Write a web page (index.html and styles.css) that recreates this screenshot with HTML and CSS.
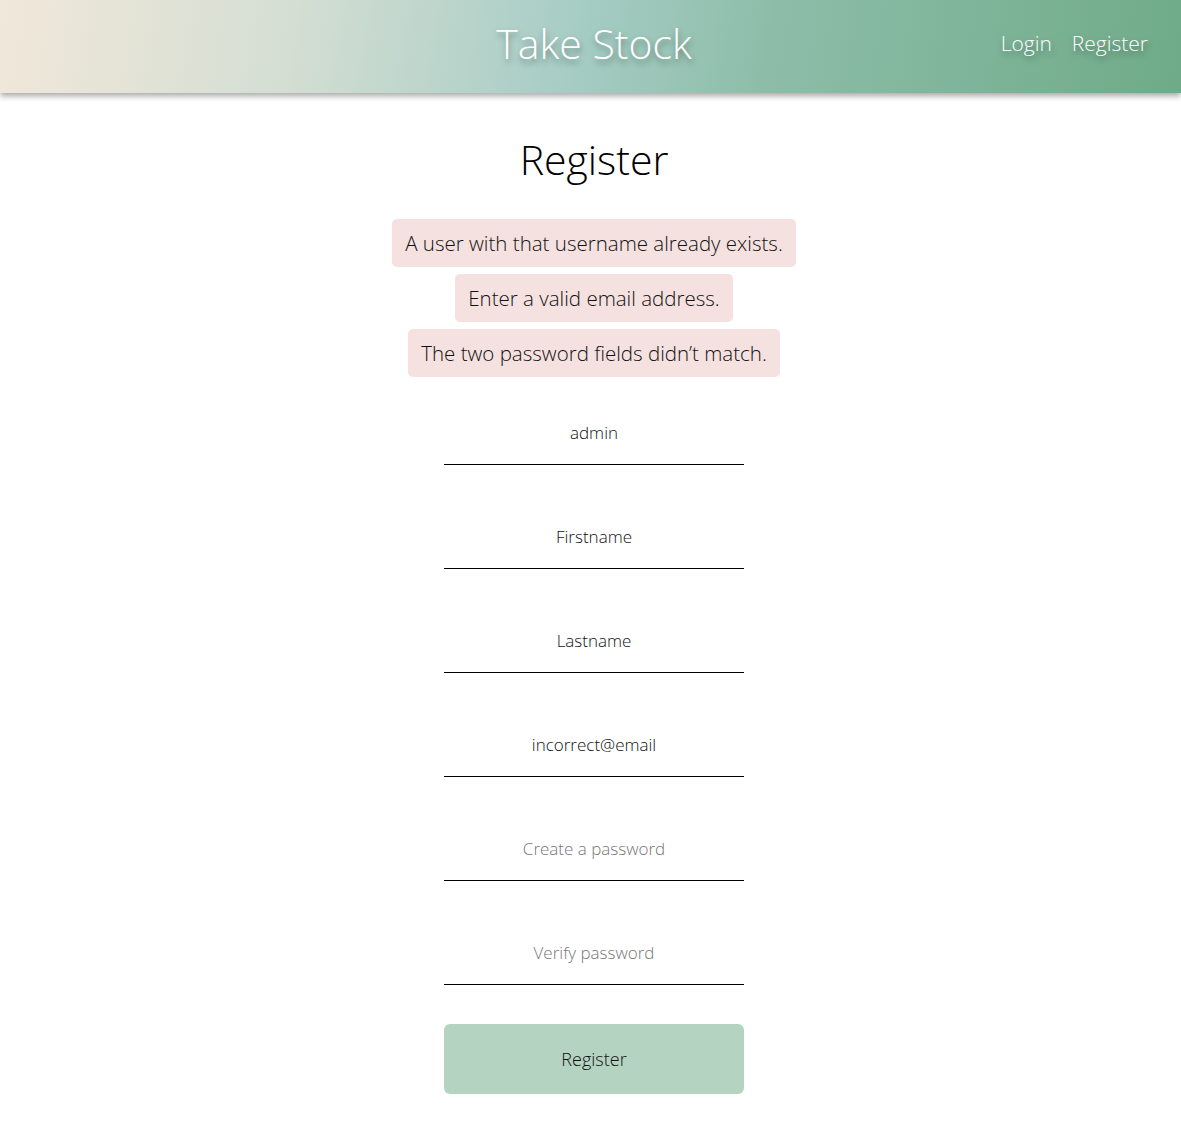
FILE: index.html
```html
<!DOCTYPE html>
<html lang="en">
<head>
<meta charset="utf-8">
<title>Take Stock - Register</title>
<link rel="stylesheet" href="styles.css">
</head>
<body>
<header class="topbar">
  <div class="topbar-side"></div>
  <a class="brand" href="#">Take Stock</a>
  <nav class="nav">
    <a href="#" class="nav-link">Login</a>
    <a href="#" class="nav-link">Register</a>
  </nav>
</header>
<main class="page">
  <h1 class="title">Register</h1>
  <ul class="errors">
    <li class="error">A user with that username already exists.</li>
    <li class="error">Enter a valid email address.</li>
    <li class="error">The two password fields didn’t match.</li>
  </ul>
  <form class="form">
    <input class="field" type="text" value="admin">
    <input class="field" type="text" value="Firstname">
    <input class="field" type="text" value="Lastname">
    <input class="field" type="text" value="incorrect@email">
    <input class="field" type="password" placeholder="Create a password">
    <input class="field" type="password" placeholder="Verify password">
    <button class="submit" type="button">Register</button>
  </form>
</main>
</body>
</html>
```

FILE: styles.css
```css
html, body {
  margin: 0;
  padding: 0;
  background: #ffffff;
  overflow: hidden;
}
body {
  font-family: "Open Sans", "Noto Sans", sans-serif;
  font-weight: 300;
  color: #111;
}
.topbar {
  height: 93px;
  display: grid;
  grid-template-columns: 1fr auto 1fr;
  align-items: center;
  padding-left: 7px;
  background: linear-gradient(100deg, #f1e8da 0%, #d4ded3 25%, #a7cdc5 48%, #8dbda9 65%, #6fab88 100%);
  box-shadow: 0 3px 6px rgba(0, 0, 0, 0.35);
  position: relative;
  z-index: 1;
}
.brand {
  color: #ffffff;
  text-decoration: none;
  font-size: 41px;
  line-height: 1;
  padding-bottom: 6px;
  text-shadow: 1px 4px 6px rgba(0, 0, 0, 0.35);
}
.nav {
  justify-self: end;
  display: flex;
  gap: 20px;
  padding-right: 33px;
  padding-bottom: 6px;
}
.nav-link {
  color: #ffffff;
  text-decoration: none;
  font-size: 21px;
  line-height: 1;
  text-shadow: 1px 4px 6px rgba(0, 0, 0, 0.35);
}
.page {
  display: flex;
  flex-direction: column;
  align-items: center;
  padding-left: 7px;
}
.title {
  margin: 38px 0 0;
  font-weight: 300;
  font-size: 41px;
  line-height: 56px;
  color: #000;
}
.errors {
  list-style: none;
  margin: 32px 0 0;
  padding: 0;
  display: flex;
  flex-direction: column;
  align-items: center;
  gap: 7px;
}
.error {
  background: #f5e1e0;
  border-radius: 5px;
  padding: 12px 13px;
  font-size: 20.5px;
  line-height: 24px;
  color: #111;
}
.form {
  display: flex;
  flex-direction: column;
  align-items: center;
  gap: 43px;
  margin-top: 27px;
}
.field {
  box-sizing: border-box;
  width: 300px;
  height: 61px;
  border: none;
  border-bottom: 1px solid #000;
  background: transparent;
  text-align: center;
  font-family: "Open Sans", "Noto Sans", sans-serif;
  font-weight: 300;
  font-size: 17px;
  color: #111;
  padding: 0 0 4px;
  outline: none;
}
.field::placeholder {
  color: #777;
}
.submit {
  width: 300px;
  height: 70px;
  margin-top: -4px;
  border: none;
  border-radius: 6px;
  background: #b5d3c1;
  font-family: "Open Sans", "Noto Sans", sans-serif;
  font-weight: 300;
  font-size: 18px;
  color: #111;
}
```
